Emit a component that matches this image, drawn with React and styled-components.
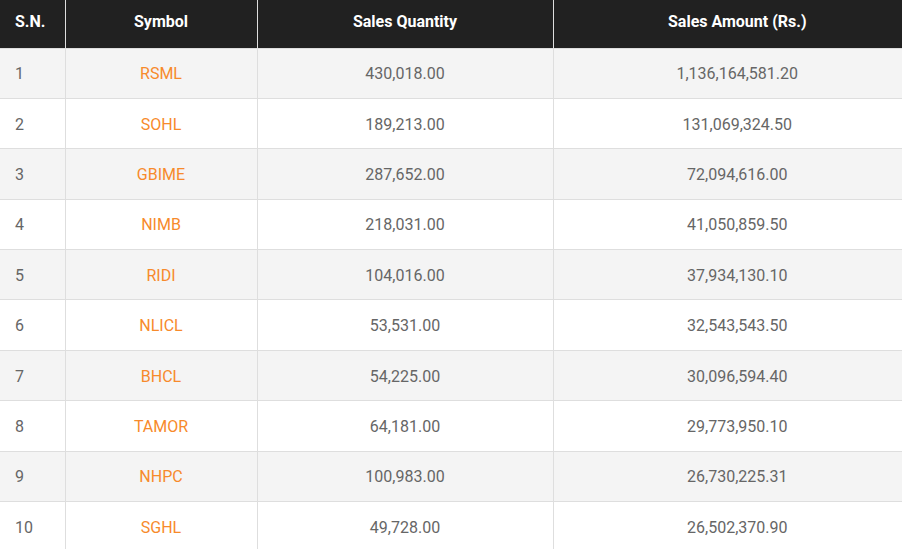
import React from "react";
import styled, { createGlobalStyle } from "styled-components";

const GlobalStyle = createGlobalStyle`
  html, body {
    margin: 0;
    padding: 0;
    background: #fff;
    font-family: Roboto, "Liberation Sans", sans-serif;
  }
`;

const Wrapper = styled.div`
  width: 902px;
  overflow: hidden;
`;

const Table = styled.table`
  width: 921px;
  border-collapse: collapse;
  table-layout: fixed;
  font-size: 16px;
`;

const HeadCell = styled.th`
  background-color: #212121;
  color: #fff;
  font-weight: 700;
  font-size: 16px;
  line-height: 24px;
  height: 48px;
  padding: 0 15px 4px;
  box-sizing: border-box;
  text-align: ${props => (props.$left ? "left" : "center")};
  border-left: 1px solid #dedede;
  border-bottom: 1px solid #dedede;
  &:first-child {
    border-left: none;
  }
`;

const Row = styled.tr`
  background-color: ${props => (props.$odd ? "#f4f4f4" : "#fff")};
`;

const Cell = styled.td`
  color: ${props => (props.$symbol ? "#f78a2b" : "#666")};
  line-height: 24px;
  height: 50.4px;
  padding: 2px 15px 0;
  box-sizing: border-box;
  text-align: ${props => (props.$left ? "left" : "center")};
  border-left: 1px solid #dedede;
  border-bottom: 1px solid #dedede;
  &:first-child {
    border-left: none;
  }
`;

const rows = [
  ["RSML", "430,018.00", "1,136,164,581.20"],
  ["SOHL", "189,213.00", "131,069,324.50"],
  ["GBIME", "287,652.00", "72,094,616.00"],
  ["NIMB", "218,031.00", "41,050,859.50"],
  ["RIDI", "104,016.00", "37,934,130.10"],
  ["NLICL", "53,531.00", "32,543,543.50"],
  ["BHCL", "54,225.00", "30,096,594.40"],
  ["TAMOR", "64,181.00", "29,773,950.10"],
  ["NHPC", "100,983.00", "26,730,225.31"],
  ["SGHL", "49,728.00", "26,502,370.90"],
];

function App() {
  return (
    <Wrapper>
      <GlobalStyle />
      <Table>
        <colgroup>
          <col style={{ width: 65 }} />
          <col style={{ width: 192 }} />
          <col style={{ width: 296 }} />
          <col />
        </colgroup>
        <thead>
          <tr>
            <HeadCell $left>S.N.</HeadCell>
            <HeadCell>Symbol</HeadCell>
            <HeadCell>Sales Quantity</HeadCell>
            <HeadCell>Sales Amount (Rs.)</HeadCell>
          </tr>
        </thead>
        <tbody>
          {rows.map(([symbol, qty, amount], i) => (
            <Row key={symbol} $odd={i % 2 === 0}>
              <Cell $left>{i + 1}</Cell>
              <Cell $symbol>{symbol}</Cell>
              <Cell>{qty}</Cell>
              <Cell>{amount}</Cell>
            </Row>
          ))}
        </tbody>
      </Table>
    </Wrapper>
  );
}

export default App;
